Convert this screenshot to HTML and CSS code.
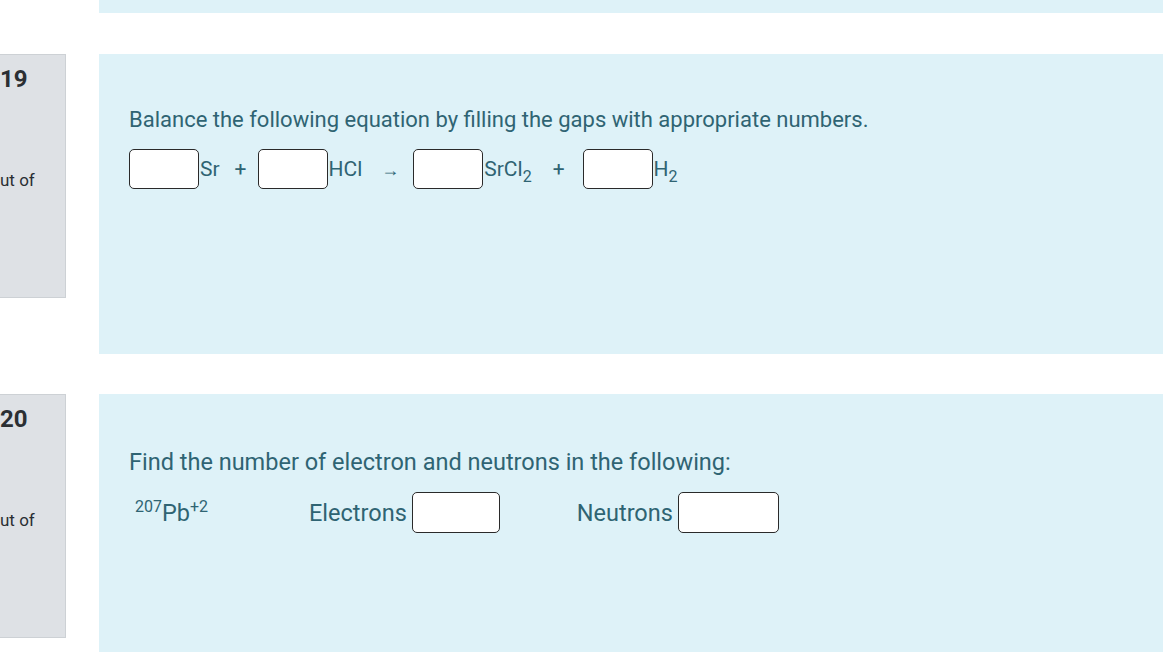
FILE: index.html
```html
<!DOCTYPE html>
<html lang="en">
<head>
<meta charset="utf-8">
<title>Quiz</title>
<link rel="stylesheet" href="styles.css">
</head>
<body>
<div class="page">
  <div class="top-strip"></div>

  <div class="que">
    <div class="info">
      <div class="qno">19</div>
      <div class="grade">ut of</div>
    </div>
    <div class="formulation">
      <p class="qtext">Balance the following equation by filling the gaps with appropriate numbers.</p>
      <div class="equation">
        <input class="gap" type="text" aria-label="coefficient 1">
        <span class="chem">Sr</span>
        <span class="op">+</span>
        <input class="gap" type="text" aria-label="coefficient 2">
        <span class="chem">HCl</span>
        <span class="arrow">&rarr;</span>
        <input class="gap" type="text" aria-label="coefficient 3">
        <span class="chem">SrCl<sub>2</sub></span>
        <span class="op op-2">+</span>
        <input class="gap" type="text" aria-label="coefficient 4">
        <span class="chem">H<sub>2</sub></span>
      </div>
    </div>
  </div>

  <div class="que">
    <div class="info">
      <div class="qno">20</div>
      <div class="grade">ut of</div>
    </div>
    <div class="formulation formulation-last">
      <p class="qtext qtext-2">Find the number of electron and neutrons in the following:</p>
      <div class="particles">
        <span class="isotope"><sup>207</sup>Pb<sup>+2</sup></span>
        <label class="field field-e">Electrons <input class="gap gap-e" type="text"></label>
        <label class="field field-n">Neutrons <input class="gap gap-n" type="text"></label>
      </div>
    </div>
  </div>
</div>
</body>
</html>
```

FILE: styles.css
```css
html, body {
  margin: 0;
  padding: 0;
  background: #ffffff;
}

body {
  font-family: Roboto, "Liberation Sans", Arial, sans-serif;
  overflow: hidden;
  height: 652px;
}

.page {
  display: flex;
  flex-direction: column;
}

.top-strip {
  margin-left: 99px;
  height: 13px;
  background: #def2f8;
}

.que {
  display: flex;
  align-items: flex-start;
  gap: 33px;
  margin-top: 40px;
}

.page > .top-strip + .que {
  margin-top: 41px;
}

.info {
  box-sizing: border-box;
  width: 66px;
  height: 244px;
  flex: none;
  background: #dee1e5;
  border: 1px solid #cdd1d5;
  border-left: none;
  color: #2b2f33;
  padding-top: 8px;
}

.qno {
  font-size: 24px;
  font-weight: 700;
  line-height: 32px;
}

.grade {
  font-size: 17px;
  line-height: 24px;
  margin-top: 73px;
}

.formulation {
  flex: 1;
  box-sizing: border-box;
  height: 300px;
  background: #def2f8;
  color: #2f6473;
  padding: 51px 0 0 30px;
}

.formulation-last {
  height: 258px;
}

.qtext {
  margin: 0;
  font-size: 22px;
  line-height: 30px;
}

.equation {
  display: flex;
  align-items: center;
  margin-top: 14px;
  font-size: 21px;
}

.gap {
  box-sizing: border-box;
  width: 70px;
  height: 40px;
  margin: 0;
  padding: 0 6px;
  background: #ffffff;
  border: 1px solid #2a2a2a;
  border-radius: 5px;
  font: inherit;
}

.chem {
  margin-left: 1px;
}

.chem sub {
  font-size: 16px;
  vertical-align: -6px;
  line-height: 0;
}

.op {
  margin: 0 11px 0 15px;
}

.op-2 {
  margin: 0 18px 0 21px;
}

.arrow {
  font-size: 18px;
  margin: 2px 14px 0 19px;
}

.qtext-2 {
  font-size: 23.5px;
  margin-top: 2px;
}

.particles {
  display: flex;
  align-items: center;
  margin-top: 15px;
  font-size: 23.5px;
}

.isotope {
  margin-left: 6px;
  width: 174px;
}

.isotope sup {
  font-size: 16px;
  vertical-align: 9px;
  line-height: 0;
}

.field {
  display: flex;
  align-items: center;
  gap: 5px;
}

.field-n {
  margin-left: 77px;
}

.gap-e {
  width: 88px;
  height: 41px;
}

.gap-n {
  width: 101px;
  height: 41px;
}
```
